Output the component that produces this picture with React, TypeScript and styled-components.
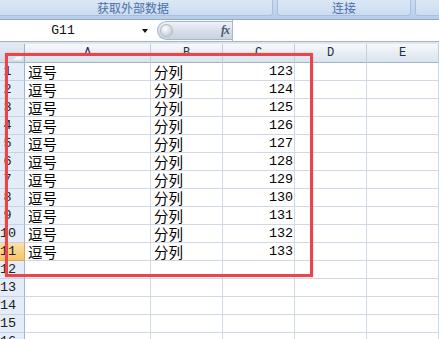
import React from 'react';
import styled, { createGlobalStyle } from 'styled-components';

const Global = createGlobalStyle`
  html, body { margin: 0; padding: 0; background: #fff; }
  body { width: 439px; height: 339px; overflow: hidden; }
`;

const Window = styled.div`
  position: relative;
  width: 439px;
  height: 339px;
  overflow: hidden;
  background: #fff;
  display: flex;
  flex-direction: column;
  font-family: "Noto Sans CJK SC", sans-serif;
`;

const Ribbon = styled.div`
  height: 20px;
  box-sizing: border-box;
  display: flex;
  gap: 4px;
  background: linear-gradient(#c9dbf0, #b7cde8);
  border-bottom: 1px solid #8ea8c8;
  flex-shrink: 0;
`;

const Group = styled.div<{ $w: number; $offset?: number }>`
  width: ${p => p.$w}px;
  margin-left: ${p => p.$offset ?? 0}px;
  flex-shrink: 0;
  height: 16px;
  box-sizing: border-box;
  background: linear-gradient(#dce7f5, #cbdcf1);
  border: 1px solid #a9c0dd;
  border-top: none;
  border-radius: 0 0 3px 3px;
  color: #4a70a8;
  font-size: 12px;
  line-height: 15px;
  text-align: center;
`;

const FormulaBar = styled.div`
  height: 22px;
  box-sizing: border-box;
  display: flex;
  align-items: center;
  background: #fff;
  border-bottom: 1px solid #a3b4ca;
  flex-shrink: 0;
`;

const NameBox = styled.div`
  width: 152px;
  height: 100%;
  display: flex;
  align-items: center;
  justify-content: space-between;
  flex-shrink: 0;
`;

const NameText = styled.span`
  width: 126px;
  text-align: center;
  font-family: "Liberation Mono", monospace;
  font-size: 13px;
  color: #111;
`;

const DropArrow = styled.span`
  width: 0;
  height: 0;
  border-left: 3.5px solid transparent;
  border-right: 3.5px solid transparent;
  border-top: 4px solid #111;
  margin-right: 4px;
`;

const FxButton = styled.div`
  margin-left: 5px;
  width: 75px;
  height: 19px;
  box-sizing: border-box;
  display: flex;
  align-items: center;
  justify-content: space-between;
  border: 1px solid #a6b6cb;
  border-right: none;
  border-radius: 10px 0 0 10px;
  background: linear-gradient(#eef2f7, #d3dce8 60%, #c9d3e0);
  flex-shrink: 0;
`;

const Knob = styled.span`
  width: 13px;
  height: 13px;
  margin-left: 2px;
  border-radius: 50%;
  background: radial-gradient(circle at 40% 35%, #ffffff, #c4ccd6 70%, #a9b3c0);
  box-shadow: inset 0 0 0 1px #b2bccb;
`;

const FxLabel = styled.span`
  font-family: "Liberation Serif", serif;
  font-style: italic;
  font-weight: bold;
  font-size: 12px;
  color: #4a5a70;
  margin-right: 3px;
  letter-spacing: -1px;
`;

const FormulaInput = styled.div`
  flex: 1;
  height: 100%;
  border-left: 1px solid #a6b6cb;
  background: #fff;
`;

const Band = styled.div`
  height: 2px;
  background: #dfe6ef;
  flex-shrink: 0;
`;

const Sheet = styled.div`
  display: grid;
  grid-template-columns: 25px 126px 72px 72px 72px 1fr;
  grid-auto-rows: 18px;
  grid-template-rows: 19px;
`;

const Corner = styled.div`
  position: relative;
  box-sizing: border-box;
  background: linear-gradient(#e3e9f1, #d3dce8);
  border-right: 1px solid #9eb6ce;
  border-bottom: 1px solid #9eb6ce;
  &::after {
    content: "";
    position: absolute;
    right: 2px;
    bottom: 2px;
    width: 0;
    height: 0;
    border-left: 9px solid transparent;
    border-bottom: 9px solid #f4f6f9;
  }
`;

const ColHeader = styled.div`
  box-sizing: border-box;
  background: linear-gradient(#f7f9fc, #e6ecf3 55%, #dbe3ed);
  border-right: 1px solid #c3cfdd;
  border-bottom: 1px solid #9eb6ce;
  font-family: "Liberation Mono", monospace;
  font-size: 12px;
  line-height: 19px;
  text-align: center;
  color: #1f2f45;
`;

const RowHeader = styled.div<{ $selected?: boolean }>`
  box-sizing: border-box;
  background: ${p => (p.$selected ? 'linear-gradient(#fbe0a8, #f4c46a)' : '#e4ecf7')};
  border-right: 1px solid ${p => (p.$selected ? '#f0a040' : '#9eb6ce')};
  border-bottom: 1px solid ${p => (p.$selected ? '#eaa34a' : '#c5d3e4')};
  font-family: "Liberation Mono", monospace;
  font-size: 13.5px;
  line-height: 18px;
  padding-right: 9px;
  text-align: center;
  color: #222;
`;

const Cell = styled.div<{ $num?: boolean }>`
  box-sizing: border-box;
  display: flex;
  align-items: center;
  justify-content: ${p => (p.$num ? 'flex-end' : 'flex-start')};
  border-right: 1px solid #d0d7e5;
  border-bottom: 1px solid #d0d7e5;
  padding: ${p => (p.$num ? '1px 1px 0 0' : '1px 0 0 3px')};
  font-family: ${p => (p.$num ? '"Liberation Mono", monospace' : '"Noto Sans CJK SC", sans-serif')};
  font-size: ${p => (p.$num ? '13.4px' : '14.5px')};
  line-height: 16px;
  color: #000;
  white-space: nowrap;
`;

const Highlight = styled.div`
  position: absolute;
  left: 5px;
  top: 53px;
  width: 308px;
  height: 224px;
  box-sizing: border-box;
  border: 3px solid #e9454c;
  box-shadow: 0 0 1px rgba(233, 69, 76, 0.6);
  pointer-events: none;
`;

const columns = ['A', 'B', 'C', 'D', 'E'];
const rows = Array.from({ length: 16 }, (_, i) => i + 1);

export default function App() {
  return (
    <>
      <Global />
      <Window>
        <Ribbon>
          <Group $w={280} $offset={-7}>获取外部数据</Group>
          <Group $w={134}>连接</Group>
          <Group $w={60} />
        </Ribbon>
        <FormulaBar>
          <NameBox>
            <NameText>G11</NameText>
            <DropArrow />
          </NameBox>
          <FxButton>
            <Knob />
            <FxLabel>fx</FxLabel>
          </FxButton>
          <FormulaInput />
        </FormulaBar>
        <Band />
        <Sheet>
          <Corner />
          {columns.map(c => (
            <ColHeader key={c}>{c}</ColHeader>
          ))}
          {rows.map(r => {
            const filled = r <= 11;
            return (
              <React.Fragment key={r}>
                <RowHeader $selected={r === 11}>{r}</RowHeader>
                <Cell>{filled ? '逗号' : ''}</Cell>
                <Cell>{filled ? '分列' : ''}</Cell>
                <Cell $num>{filled ? 122 + r : ''}</Cell>
                <Cell />
                <Cell />
              </React.Fragment>
            );
          })}
        </Sheet>
        <Highlight />
      </Window>
    </>
  );
}
